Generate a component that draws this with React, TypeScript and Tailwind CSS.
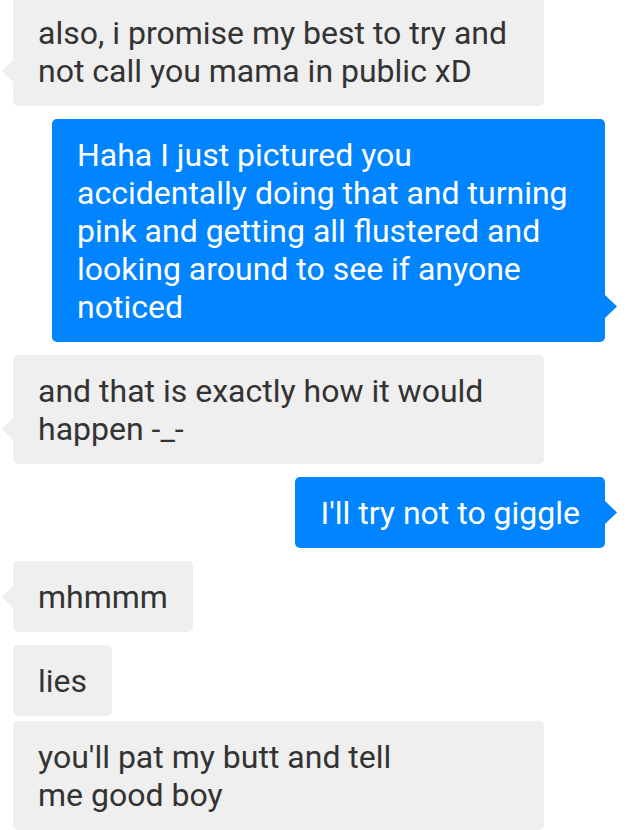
import React from 'react';

type Msg = {
  lines: string[];
  mine: boolean;
  tail: boolean;
  full?: boolean;
  gap: string;
};

const messages: Msg[] = [
  { lines: ['also, i promise my best to try and', 'not call you mama in public xD'], mine: false, tail: true, full: true, gap: '-mt-[3px]' },
  {
    lines: [
      'Haha I just pictured you',
      'accidentally doing that and turning',
      'pink and getting all flustered and',
      'looking around to see if anyone',
      'noticed',
    ],
    mine: true,
    tail: true,
    full: true,
    gap: 'mt-[13px]',
  },
  { lines: ['and that is exactly how it would', 'happen -_-'], mine: false, tail: true, full: true, gap: 'mt-[13px]' },
  { lines: ["I'll try not to giggle"], mine: true, tail: true, gap: 'mt-[13px]' },
  { lines: ['mhmmm'], mine: false, tail: true, gap: 'mt-[13px]' },
  { lines: ['lies'], mine: false, tail: false, gap: 'mt-[13px]' },
  { lines: ["you'll pat my butt and tell", 'me good boy'], mine: false, tail: false, full: true, gap: 'mt-[5px]' },
];

const Tail = ({ mine }: { mine: boolean }) =>
  mine ? (
    <svg
      className="absolute right-[-12px] bottom-[24px]"
      width="12"
      height="23"
      viewBox="0 0 12 23"
    >
      <polygon points="0,0 12,11.5 0,23" fill="#0084ff" />
    </svg>
  ) : (
    <svg
      className="absolute left-[-11px] bottom-[24px]"
      width="11"
      height="22"
      viewBox="0 0 11 22"
    >
      <polygon points="11,0 0,11 11,22" fill="#efefef" />
    </svg>
  );

const Bubble = ({ msg }: { msg: Msg }) => {
  const width = msg.full ? (msg.mine ? 'w-[553px]' : 'w-[531px]') : '';
  const colors = msg.mine ? 'bg-[#0084ff] text-white' : 'bg-[#efefef] text-[#333333]';

  return (
    <div className={`flex ${msg.mine ? 'justify-end pr-[23px]' : 'justify-start pl-[13px]'} ${msg.gap}`}>
      <div className={`relative rounded-[5px] px-[25px] pt-[17px] pb-[16px] ${width} ${colors}`}>
        <p className="whitespace-nowrap text-[32px] leading-[38px]">
          {msg.lines.map((line, i) => (
            <React.Fragment key={i}>
              {i > 0 && <br />}
              {line}
            </React.Fragment>
          ))}
        </p>
        {msg.tail && <Tail mine={msg.mine} />}
      </div>
    </div>
  );
};

export default function App() {
  return (
    <div
      className="h-[830px] w-[628px] overflow-hidden bg-white"
      style={{ fontFamily: 'Roboto, "Noto Sans", sans-serif' }}
    >
      {messages.map((msg, i) => (
        <Bubble key={i} msg={msg} />
      ))}
    </div>
  );
}
